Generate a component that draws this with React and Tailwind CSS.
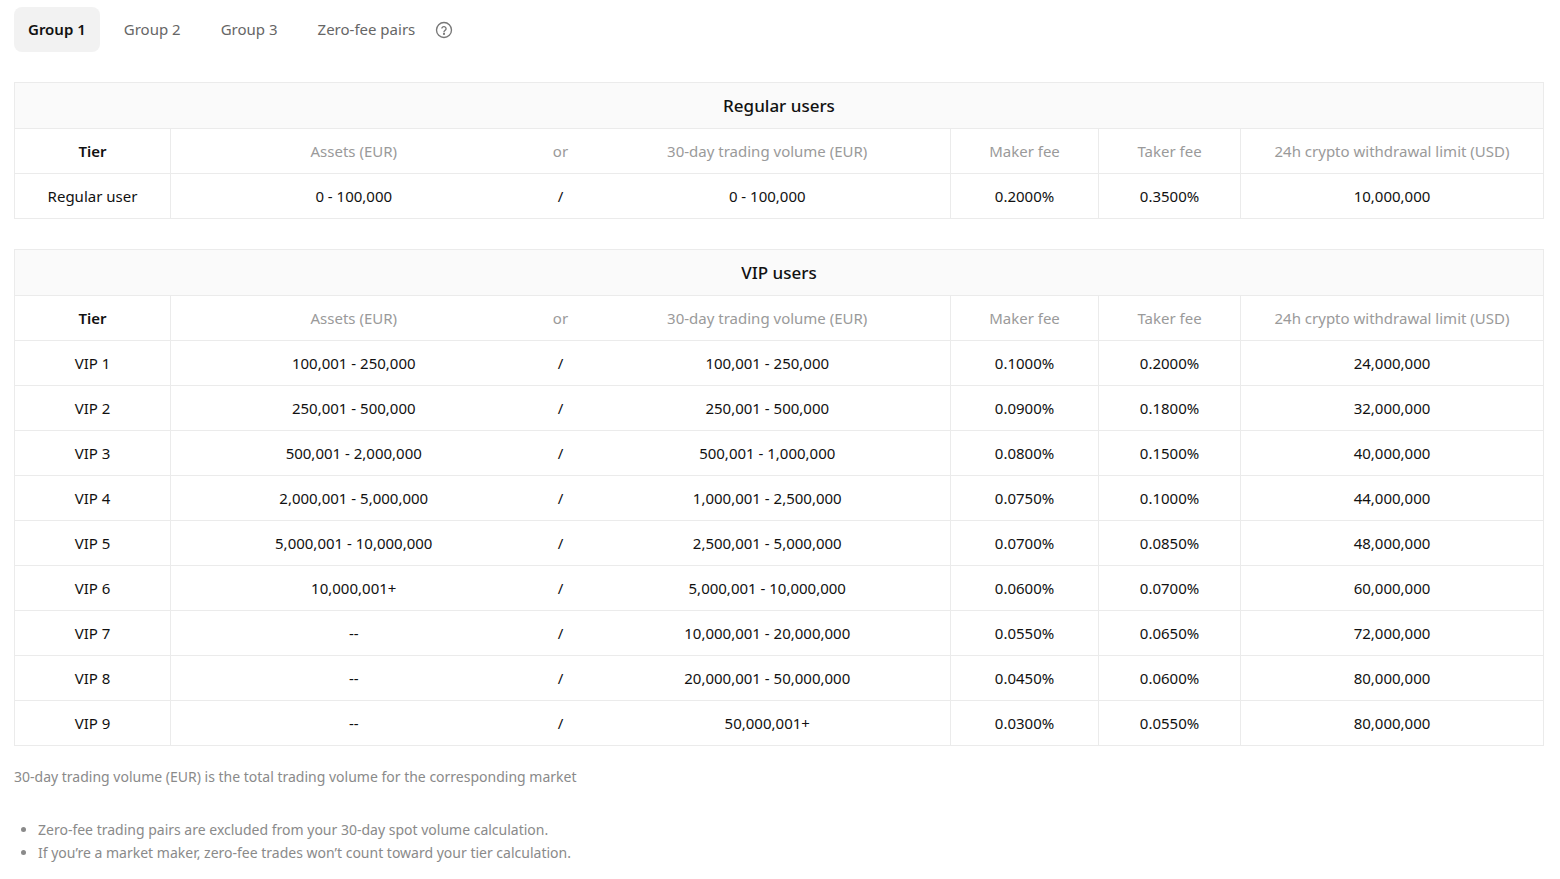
import React from "react";

const vip = [
  ["VIP 1", "100,001 - 250,000", "100,001 - 250,000", "0.1000%", "0.2000%", "24,000,000"],
  ["VIP 2", "250,001 - 500,000", "250,001 - 500,000", "0.0900%", "0.1800%", "32,000,000"],
  ["VIP 3", "500,001 - 2,000,000", "500,001 - 1,000,000", "0.0800%", "0.1500%", "40,000,000"],
  ["VIP 4", "2,000,001 - 5,000,000", "1,000,001 - 2,500,000", "0.0750%", "0.1000%", "44,000,000"],
  ["VIP 5", "5,000,001 - 10,000,000", "2,500,001 - 5,000,000", "0.0700%", "0.0850%", "48,000,000"],
  ["VIP 6", "10,000,001+", "5,000,001 - 10,000,000", "0.0600%", "0.0700%", "60,000,000"],
  ["VIP 7", "--", "10,000,001 - 20,000,000", "0.0550%", "0.0650%", "72,000,000"],
  ["VIP 8", "--", "20,000,001 - 50,000,000", "0.0450%", "0.0600%", "80,000,000"],
  ["VIP 9", "--", "50,000,001+", "0.0300%", "0.0550%", "80,000,000"],
];

function FeeTable({ title, rows }) {
  const td = "h-[45px] text-center border-t border-[#ebebeb]";
  return (
    <table className="w-[1530px] border border-[#ebebeb] border-collapse table-fixed text-[15px]">
      <colgroup>
        <col className="w-[156px]" />
        <col className="w-[366px]" />
        <col className="w-[48px]" />
        <col className="w-[366px]" />
        <col className="w-[148px]" />
        <col className="w-[142px]" />
        <col />
      </colgroup>
      <tbody>
        <tr>
          <td colSpan={7} className="h-[46px] bg-[#fafafa] text-center text-[17px] font-medium text-[#111]">{title}</td>
        </tr>
        <tr className="text-[#9a9a9a]">
          <td className={`${td} border-r font-semibold text-[#111]`}>Tier</td>
          <td className={td}>Assets (EUR)</td>
          <td className={td}>or</td>
          <td className={`${td} border-r`}>30-day trading volume (EUR)</td>
          <td className={`${td} border-r`}>Maker fee</td>
          <td className={`${td} border-r`}>Taker fee</td>
          <td className={td}>24h crypto withdrawal limit (USD)</td>
        </tr>
        {rows.map((r) => (
          <tr key={r[0]} className="text-[#111]">
            <td className={`${td} border-r`}>{r[0]}</td>
            <td className={td}>{r[1]}</td>
            <td className={td}>/</td>
            <td className={`${td} border-r`}>{r[2]}</td>
            <td className={`${td} border-r`}>{r[3]}</td>
            <td className={`${td} border-r`}>{r[4]}</td>
            <td className={td}>{r[5]}</td>
          </tr>
        ))}
      </tbody>
    </table>
  );
}

export default function App() {
  return (
    <div className="bg-white min-h-screen px-[14px] pt-[7px] font-['Inter',sans-serif]">
      <div className="flex items-center text-[15px] text-[#666]">
        <div className="h-[45px] px-[14px] flex items-center rounded-lg bg-[#f2f2f2] text-[#111] font-semibold">Group 1</div>
        <div className="px-[24px]">Group 2</div>
        <div className="px-[16px]">Group 3</div>
        <div className="px-[24px] pr-[20px]">Zero-fee pairs</div>
        <svg width="18" height="18" viewBox="0 0 24 24" fill="none" stroke="#777" strokeWidth="1.8" strokeLinecap="round">
          <circle cx="12" cy="12" r="10" />
          <path d="M9.2 9.3a2.9 2.9 0 0 1 5.6 1c0 2-2.8 2.6-2.8 4" />
          <circle cx="12" cy="17.3" r="0.6" fill="#777" />
        </svg>
      </div>
      <div className="mt-[30px]">
        <FeeTable title="Regular users" rows={[["Regular user", "0 - 100,000", "0 - 100,000", "0.2000%", "0.3500%", "10,000,000"]]} />
      </div>
      <div className="mt-[30px]">
        <FeeTable title="VIP users" rows={vip} />
      </div>
      <p className="mt-[20px] text-[14px] text-[#8a8a8a]">30-day trading volume (EUR) is the total trading volume for the corresponding market</p>
      <ul className="mt-[31px] list-disc pl-[24px] text-[14px] text-[#8a8a8a] leading-[23px]">
        <li>Zero-fee trading pairs are excluded from your 30-day spot volume calculation.</li>
        <li>If you’re a market maker, zero-fee trades won’t count toward your tier calculation.</li>
      </ul>
    </div>
  );
}
